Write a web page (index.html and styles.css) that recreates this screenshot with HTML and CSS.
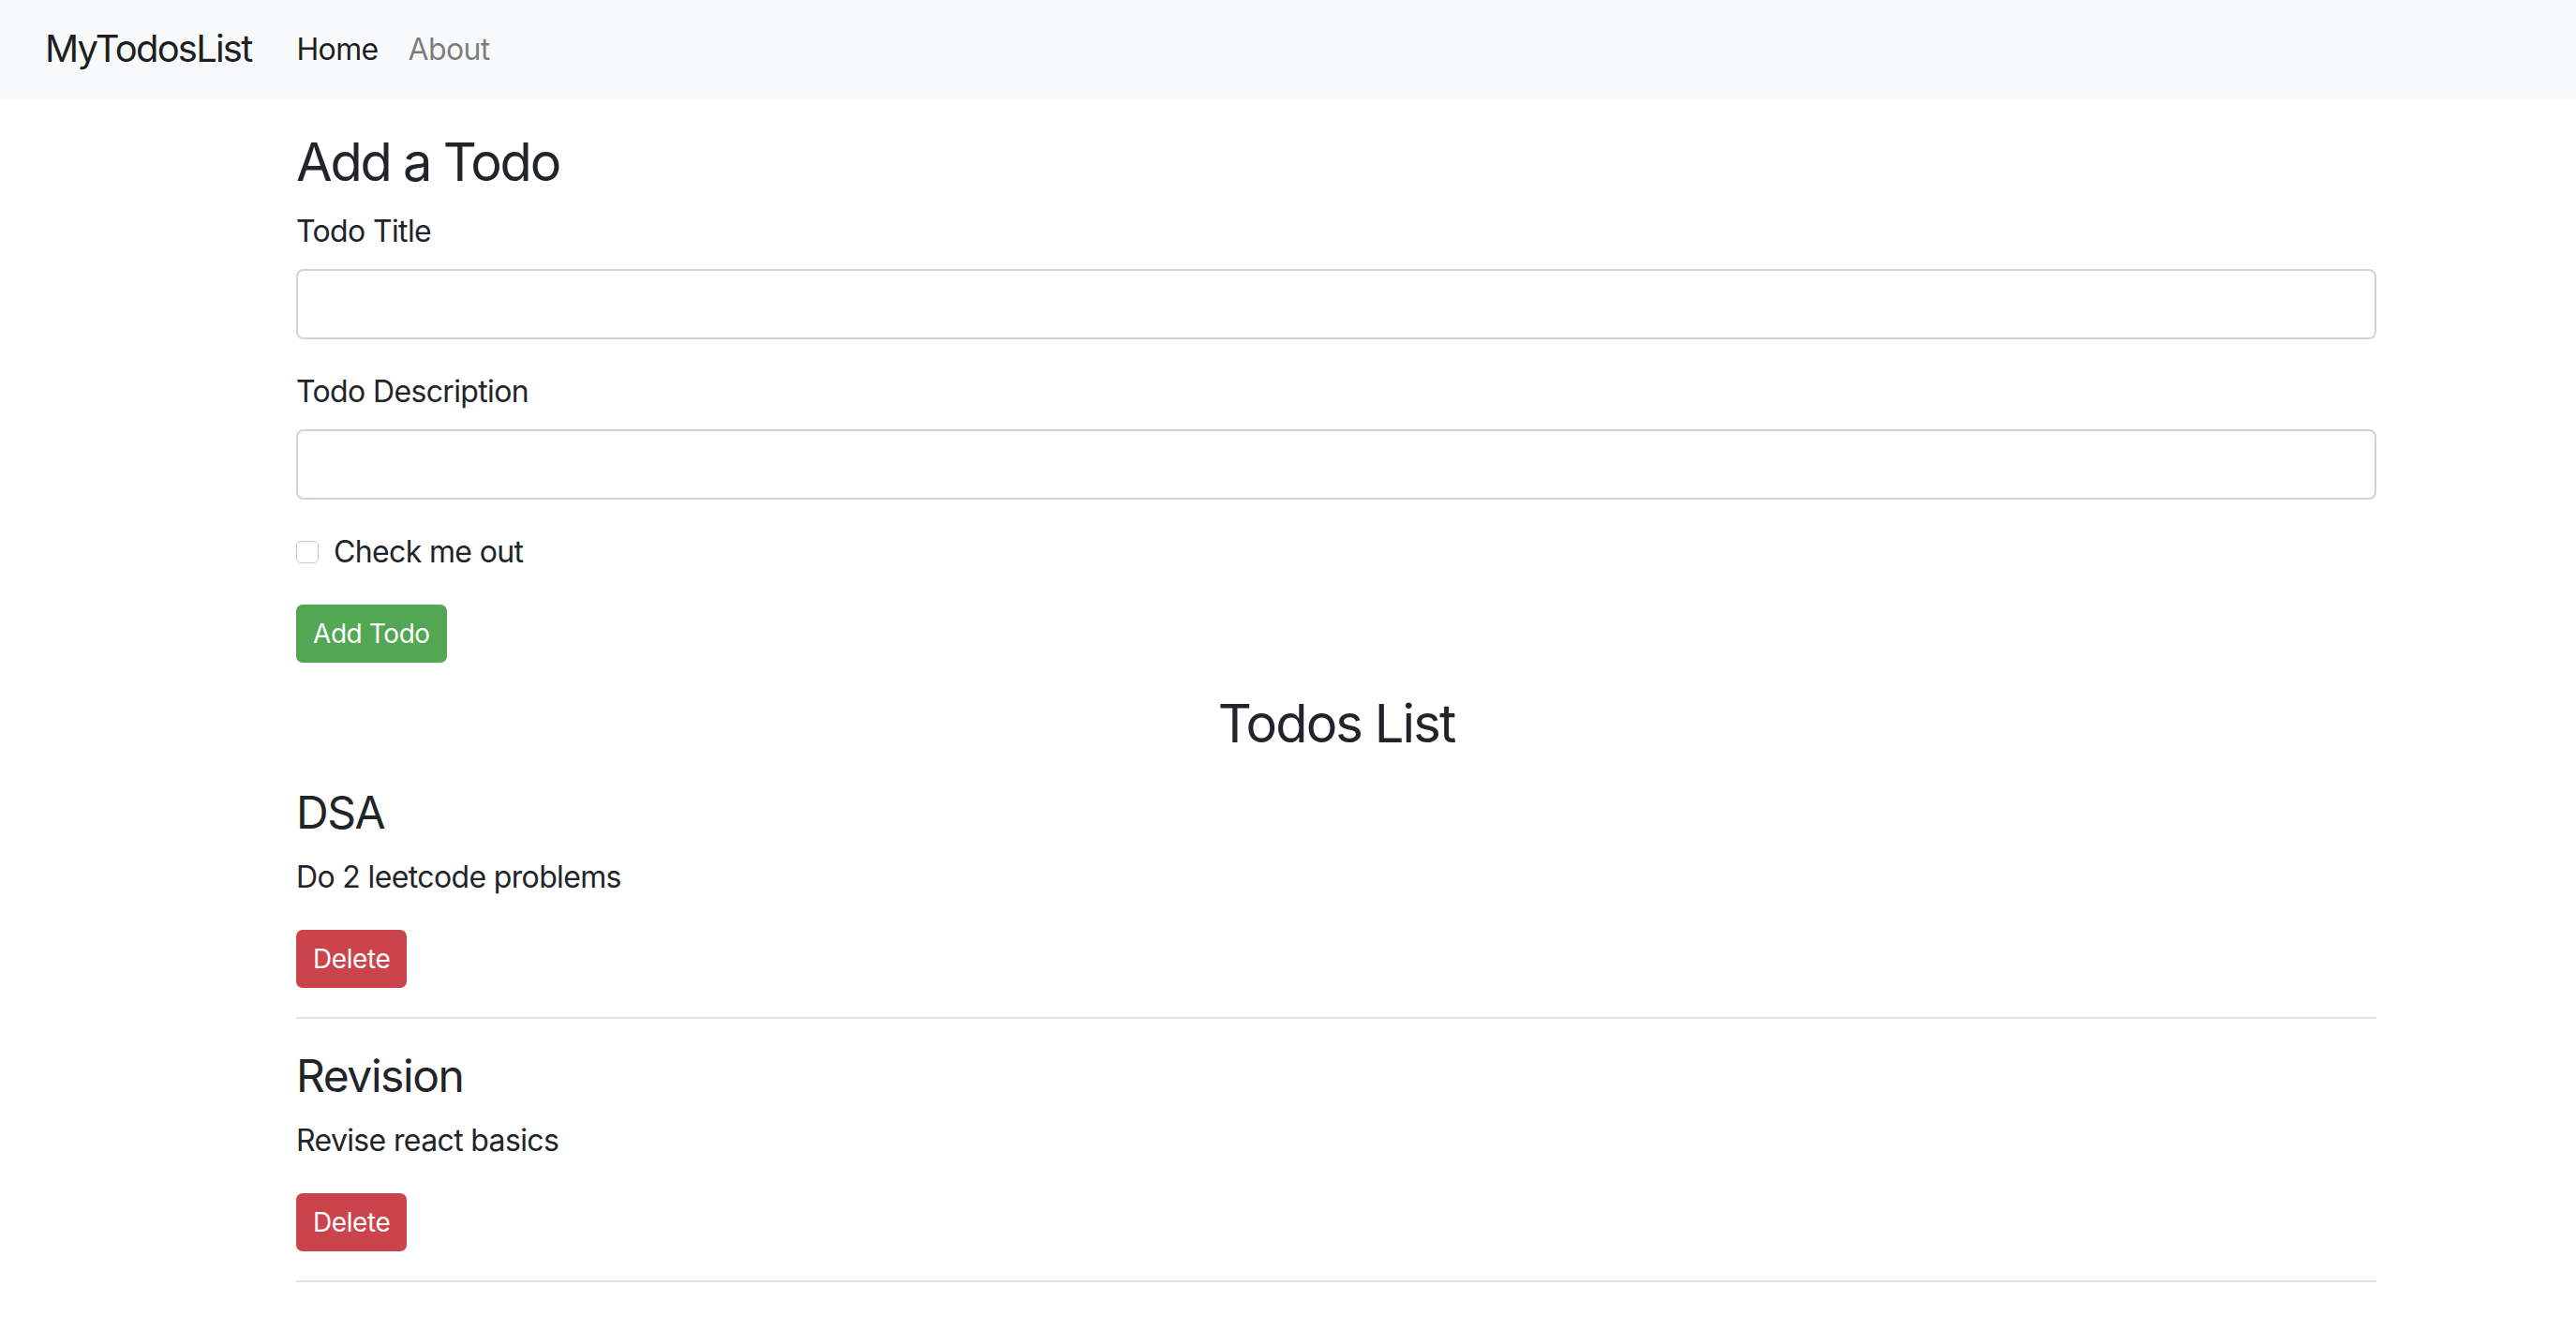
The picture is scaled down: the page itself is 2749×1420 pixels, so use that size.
FILE: index.html
```html
<!DOCTYPE html>
<html lang="en">
<head>
<meta charset="utf-8">
<title>MyTodosList</title>
<link rel="stylesheet" href="styles.css">
</head>
<body>
<nav class="navbar">
  <a class="brand" href="#">MyTodosList</a>
  <ul class="nav">
    <li><a class="nav-link active" href="#">Home</a></li>
    <li><a class="nav-link" href="#">About</a></li>
  </ul>
</nav>
<main class="container">
  <form class="add-form">
    <h3 class="heading">Add a Todo</h3>
    <div class="field">
      <label class="label" for="title">Todo Title</label>
      <input class="control" id="title" type="text">
    </div>
    <div class="field">
      <label class="label" for="desc">Todo Description</label>
      <input class="control" id="desc" type="text">
    </div>
    <div class="check">
      <span class="check-box"></span>
      <label class="check-label">Check me out</label>
    </div>
    <button class="btn btn-success" type="button">Add Todo</button>
  </form>
  <h3 class="heading list-heading">Todos List</h3>
  <div class="todo">
    <h4 class="todo-title">DSA</h4>
    <p class="todo-desc">Do 2 leetcode problems</p>
    <button class="btn btn-danger" type="button">Delete</button>
  </div>
  <hr class="divider">
  <div class="todo">
    <h4 class="todo-title">Revision</h4>
    <p class="todo-desc">Revise react basics</p>
    <button class="btn btn-danger" type="button">Delete</button>
  </div>
  <hr class="divider">
</main>
</body>
</html>
```

FILE: styles.css
```css
* { box-sizing: border-box; }
html, body {
  margin: 0;
  padding: 0;
  background: #fff;
}
body {
  font-family: Inter, "Liberation Sans", sans-serif;
  font-size: 32px;
  line-height: 1.5;
  letter-spacing: -0.02em;
  color: #212529;
}
.navbar {
  display: flex;
  align-items: center;
  height: 107px;
  padding: 0 48px;
  background: #f8f9fa;
}
.brand {
  font-size: 40px;
  line-height: 60px;
  letter-spacing: -0.045em;
  color: rgba(0,0,0,.9);
  text-decoration: none;
  margin-right: 32px;
  margin-top: -4px;
}
.nav {
  display: flex;
  list-style: none;
  margin: 0;
  padding: 0;
}
.nav-link {
  display: block;
  padding: 0 16px;
  color: rgba(0,0,0,.5);
  text-decoration: none;
  line-height: 48px;
  margin-top: -2px;
}
.nav-link.active { color: rgba(0,0,0,.9); }
.container {
  width: 2220px;
  margin-left: 316px;
  padding-top: 33px;
}
.heading {
  font-size: 56px;
  font-weight: 400;
  line-height: 1.2;
  letter-spacing: -0.04em;
  margin: 0 0 16px;
}
.field { margin-bottom: 32px; }
.label {
  display: block;
  margin-bottom: 16px;
}
.control {
  display: block;
  width: 100%;
  height: 75px;
  border: 2px solid #ced4da;
  border-radius: 8px;
  padding: 12px 24px;
  font: inherit;
  background: #fff;
}
.check {
  display: flex;
  align-items: center;
  margin-bottom: 32px;
  height: 48px;
}
.check-box {
  width: 24px;
  height: 24px;
  border: 1px solid #c9c9c9;
  border-radius: 5px;
  background: #fff;
  box-shadow: inset 0 1px 1px rgba(0,0,0,.06);
  margin-right: 16px;
  margin-top: -1px;
}
.btn {
  display: inline-block;
  font: inherit;
  font-size: 28px;
  line-height: 42px;
  letter-spacing: -0.015em;
  padding: 8px 16px;
  border: 2px solid transparent;
  border-radius: 7px;
  color: #fff;
  cursor: pointer;
}
.btn-success { background: #53a653; border-color: #53a653; }
.btn-danger { background: #cb444b; border-color: #cb444b; }
.add-form { margin-bottom: 32px; }
.list-heading {
  text-align: center;
  letter-spacing: -0.034em;
  margin-bottom: 32px;
}
.todo-title {
  font-size: 48px;
  font-weight: 400;
  line-height: 1.2;
  letter-spacing: -0.03em;
  margin: 0 0 16px;
}
.todo-desc {
  margin: 0 0 32px;
}
.divider {
  border: 0;
  border-top: 2px solid #e3e3e3;
  margin: 31px 0 32px;
}
```
